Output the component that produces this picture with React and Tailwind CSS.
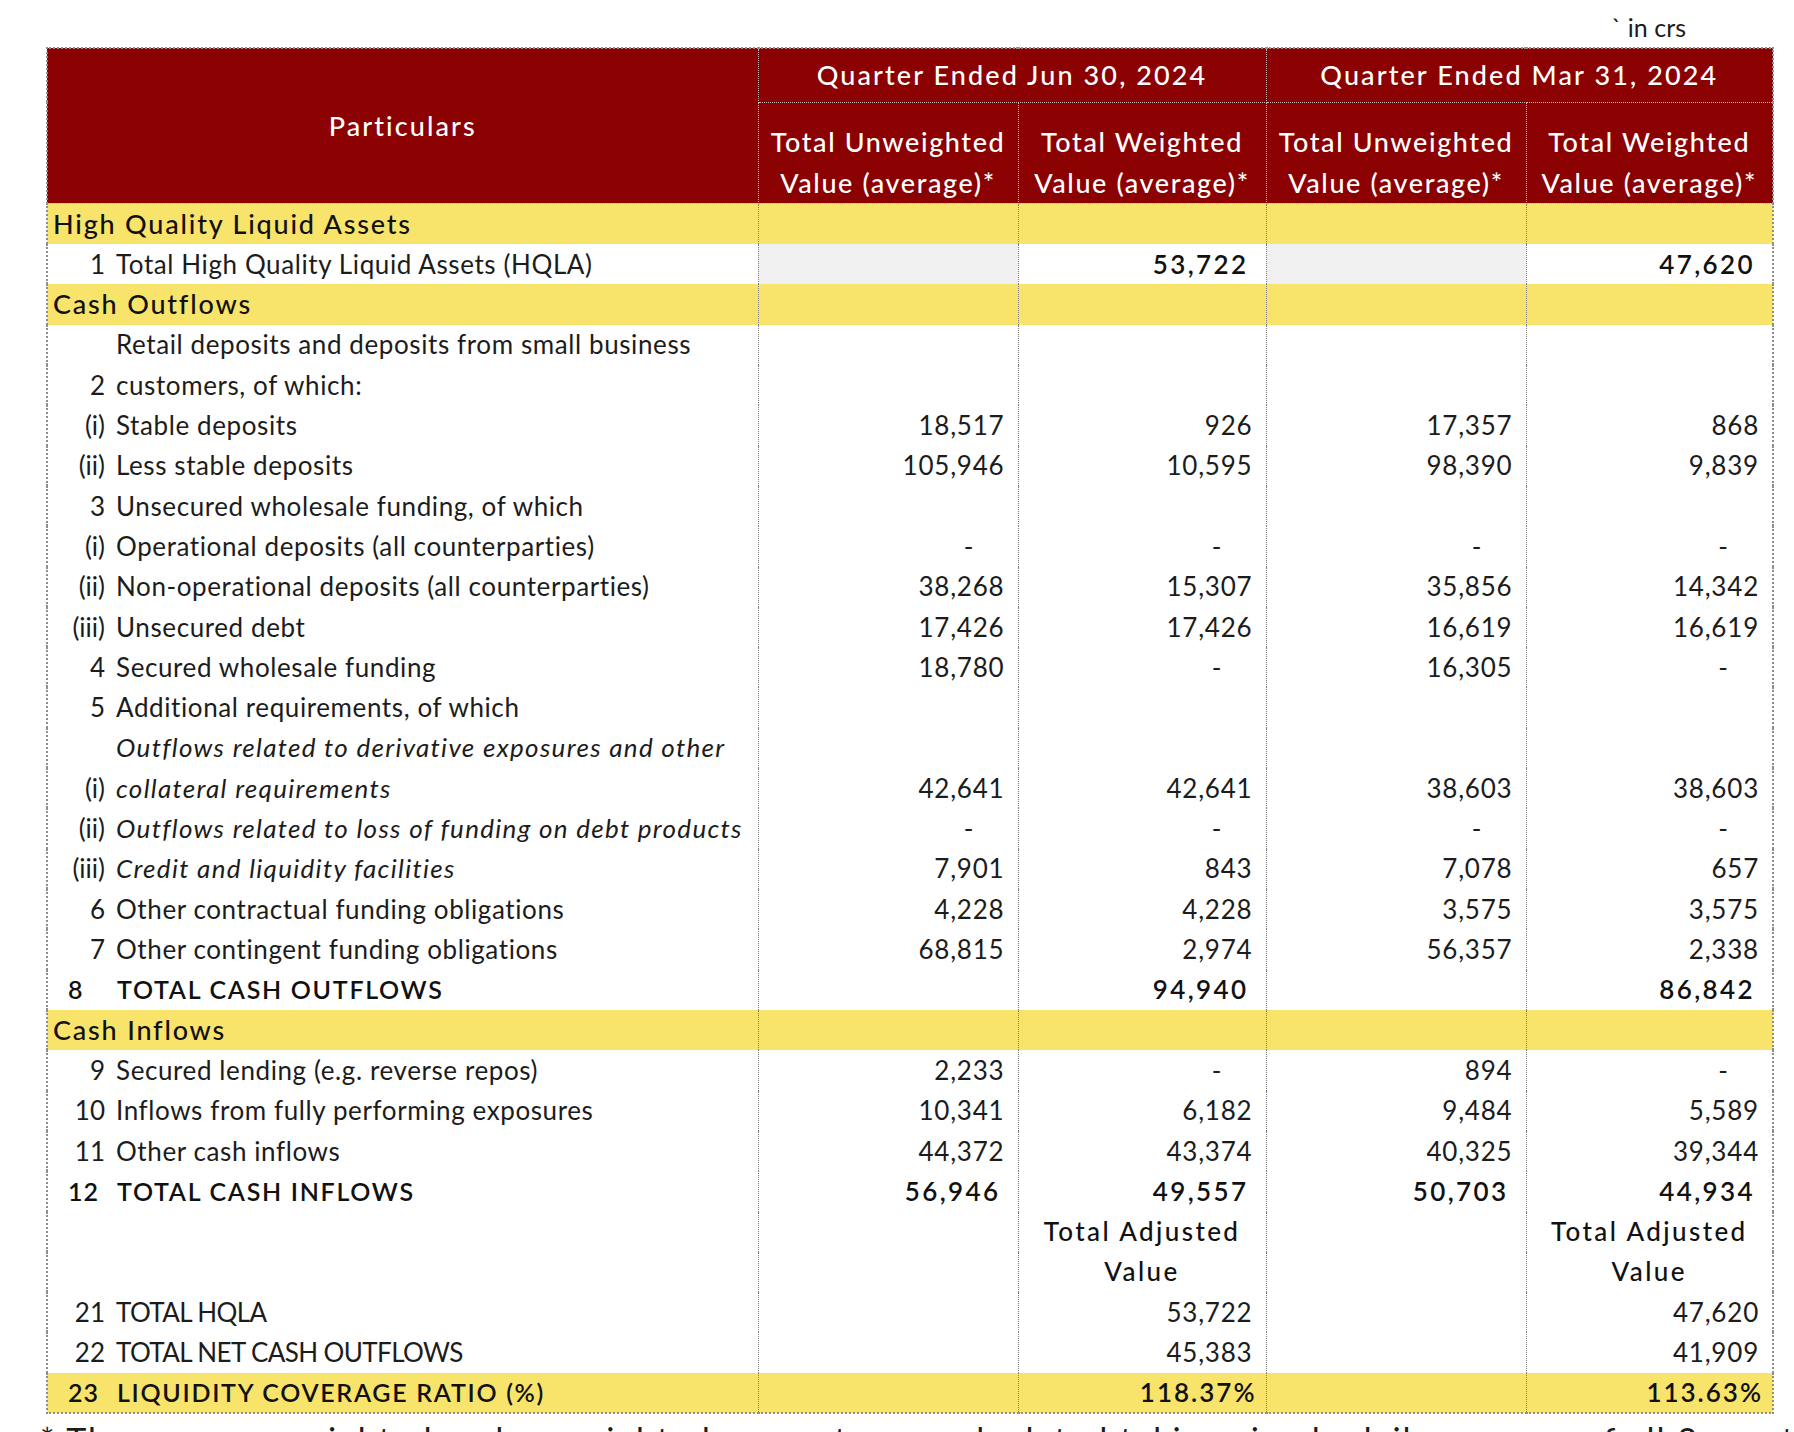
import React from "react";

const rows = [
  { kind: "section", label: "High Quality Liquid Assets" },
  { no: "1", label: "Total High Quality Liquid Assets (HQLA)", v: ["", "53,722", "", "47,620"], grey: true, strongVals: true },
  { kind: "section", label: "Cash Outflows" },
  { label: "Retail deposits and deposits from small business" },
  { no: "2", label: "customers, of which:" },
  { no: "(i)", label: "Stable deposits", v: ["18,517", "926", "17,357", "868"] },
  { no: "(ii)", label: "Less stable deposits", v: ["105,946", "10,595", "98,390", "9,839"] },
  { no: "3", label: "Unsecured wholesale funding, of which" },
  { no: "(i)", label: "Operational deposits (all counterparties)", v: ["-", "-", "-", "-"] },
  { no: "(ii)", label: "Non-operational deposits (all counterparties)", v: ["38,268", "15,307", "35,856", "14,342"] },
  { no: "(iii)", label: "Unsecured debt", v: ["17,426", "17,426", "16,619", "16,619"] },
  { no: "4", label: "Secured wholesale funding", v: ["18,780", "-", "16,305", "-"] },
  { no: "5", label: "Additional requirements, of which" },
  { label: "Outflows related to derivative exposures and other", italic: true },
  { no: "(i)", label: "collateral requirements", italic: true, v: ["42,641", "42,641", "38,603", "38,603"] },
  { no: "(ii)", label: "Outflows related to loss of funding on debt products", italic: true, v: ["-", "-", "-", "-"] },
  { no: "(iii)", label: "Credit and liquidity facilities", italic: true, v: ["7,901", "843", "7,078", "657"] },
  { no: "6", label: "Other contractual funding obligations", v: ["4,228", "4,228", "3,575", "3,575"] },
  { no: "7", label: "Other contingent funding obligations", v: ["68,815", "2,974", "56,357", "2,338"] },
  { no: "8", label: "TOTAL CASH OUTFLOWS", total: true, v: ["", "94,940", "", "86,842"] },
  { kind: "section", label: "Cash Inflows" },
  { no: "9", label: "Secured lending (e.g. reverse repos)", v: ["2,233", "-", "894", "-"] },
  { no: "10", label: "Inflows from fully performing exposures", v: ["10,341", "6,182", "9,484", "5,589"] },
  { no: "11", label: "Other cash inflows", v: ["44,372", "43,374", "40,325", "39,344"] },
  { no: "12", label: "TOTAL CASH INFLOWS", total: true, v: ["56,946", "49,557", "50,703", "44,934"] },
  { kind: "caption", text: "Total Adjusted" },
  { kind: "caption", text: "Value" },
  { no: "21", label: "TOTAL HQLA", v: ["", "53,722", "", "47,620"], caps: true },
  { no: "22", label: "TOTAL NET CASH OUTFLOWS", v: ["", "45,383", "", "41,909"], caps: true },
  { no: "23", label: "LIQUIDITY COVERAGE RATIO (%)", total: true, lcr: true, v: ["", "118.37%", "", "113.63%"] },
];

const colLine = "border-l border-dotted border-[#7d7d7d]";

function ValueCell({ value, strong, grey, lcr }) {
  const bg = grey ? "bg-[#f0f0f0]" : "";
  if (value === "-") {
    return (
      <td className={`${colLine} ${bg} text-right pr-[44px] text-[26px] text-[#1c1c1c]`}>-</td>
    );
  }
  let cls = "pr-[13px] text-[26px] tracking-[0.8px] text-[#1c1c1c]";
  if (strong) cls = "pr-[17px] text-[26px] font-semibold tracking-[2.4px] text-[#111]";
  if (lcr) cls = "pr-[9px] text-[26px] font-semibold tracking-[2px] text-[#111]";
  return <td className={`${colLine} ${bg} text-right ${cls}`}>{value}</td>;
}

function Row({ row }) {
  if (row.kind === "section") {
    return (
      <tr className="h-[40.3px] bg-[#f9e46b]">
        <td className="pl-[5px] text-[27px] font-medium tracking-[1.8px] text-[#111]">{row.label}</td>
        <td className={colLine}></td>
        <td className={colLine}></td>
        <td className={colLine}></td>
        <td className={colLine}></td>
      </tr>
    );
  }
  if (row.kind === "caption") {
    return (
      <tr className="h-[40.3px]">
        <td></td>
        <td className={colLine}></td>
        <td className={`${colLine} text-center text-[26px] font-medium tracking-[2.4px] text-[#111]`}>{row.text}</td>
        <td className={colLine}></td>
        <td className={`${colLine} text-center text-[26px] font-medium tracking-[2.4px] text-[#111]`}>{row.text}</td>
      </tr>
    );
  }
  const v = row.v || ["", "", "", ""];
  let labelCls = "ml-[11px] text-[26px] tracking-[0.6px] text-[#1c1c1c]";
  if (row.italic) labelCls = "ml-[11px] text-[26px] italic tracking-[1.3px] text-[#1c1c1c]";
  if (row.caps) labelCls = "ml-[11px] text-[26px] tracking-[-0.6px] text-[#1c1c1c]";
  if (row.total) labelCls = "text-[25px] font-semibold tracking-[1.7px] text-[#111]";
  return (
    <tr className={`h-[40.3px] ${row.lcr ? "bg-[#f9e46b]" : ""}`}>
      <td className="p-0">
        <div className="flex items-center">
          {row.total ? (
            <span className="w-[69px] pl-[20px] text-[25px] font-semibold tracking-[1px] text-[#111]">{row.no}</span>
          ) : (
            <span className="w-[57px] text-right text-[26px] text-[#1c1c1c]">{row.no}</span>
          )}
          <span className={`${labelCls} whitespace-nowrap`}>{row.label}</span>
        </div>
      </td>
      {v.map((val, i) => (
        <ValueCell
          key={i}
          value={val}
          strong={row.total || row.strongVals}
          lcr={row.lcr}
          grey={row.grey && (i === 0 || i === 2)}
        />
      ))}
    </tr>
  );
}

export default function App() {
  return (
    <div className="min-h-screen bg-white font-['Lato',sans-serif] text-black overflow-hidden">
      <div className="h-[47px] w-[1772px] flex items-center justify-end pt-[8px] pr-[86px] text-[25px] text-[#1c1c1c]">
        <span>` in crs</span>
      </div>
      <table className="ml-[46px] w-[1726px] table-fixed border-collapse border-2 border-dotted border-[#8f8f8f]">
        <colgroup>
          <col className="w-[711px]" />
          <col className="w-[260px]" />
          <col className="w-[248px]" />
          <col className="w-[260px]" />
          <col className="w-[247px]" />
        </colgroup>
        <thead className="bg-[#8b0000] text-white text-[27px] font-medium tracking-[2.1px]">
          <tr className="h-[54px]">
            <th rowSpan={2} className="font-medium border border-dotted border-[#c9b3b3]">
              Particulars
            </th>
            <th colSpan={2} className="font-medium border border-dotted border-[#c9b3b3]">
              Quarter Ended Jun 30, 2024
            </th>
            <th colSpan={2} className="font-medium border border-dotted border-[#c9b3b3]">
              Quarter Ended Mar 31, 2024
            </th>
          </tr>
          <tr className="h-[101px]">
            {[0, 1, 2, 3].map((i) => (
              <th
                key={i}
                className="align-bottom font-medium leading-[41px] pb-0 border border-dotted border-[#c9b3b3] whitespace-nowrap tracking-[1.6px]"
              >
                {i % 2 === 0 ? "Total Unweighted" : "Total Weighted"}
                <br />
                Value (average)*
              </th>
            ))}
          </tr>
        </thead>
        <tbody>
          {rows.map((row, i) => (
            <Row key={i} row={row} />
          ))}
        </tbody>
      </table>
      <p className="ml-[40px] mt-[4px] whitespace-nowrap text-[34px] leading-[44px] tracking-[2px] text-[#1c1c1c]">
        * The average weighted and unweighted amounts are calculated taking simple daily average of all 3 months of the quarter
      </p>
    </div>
  );
}
